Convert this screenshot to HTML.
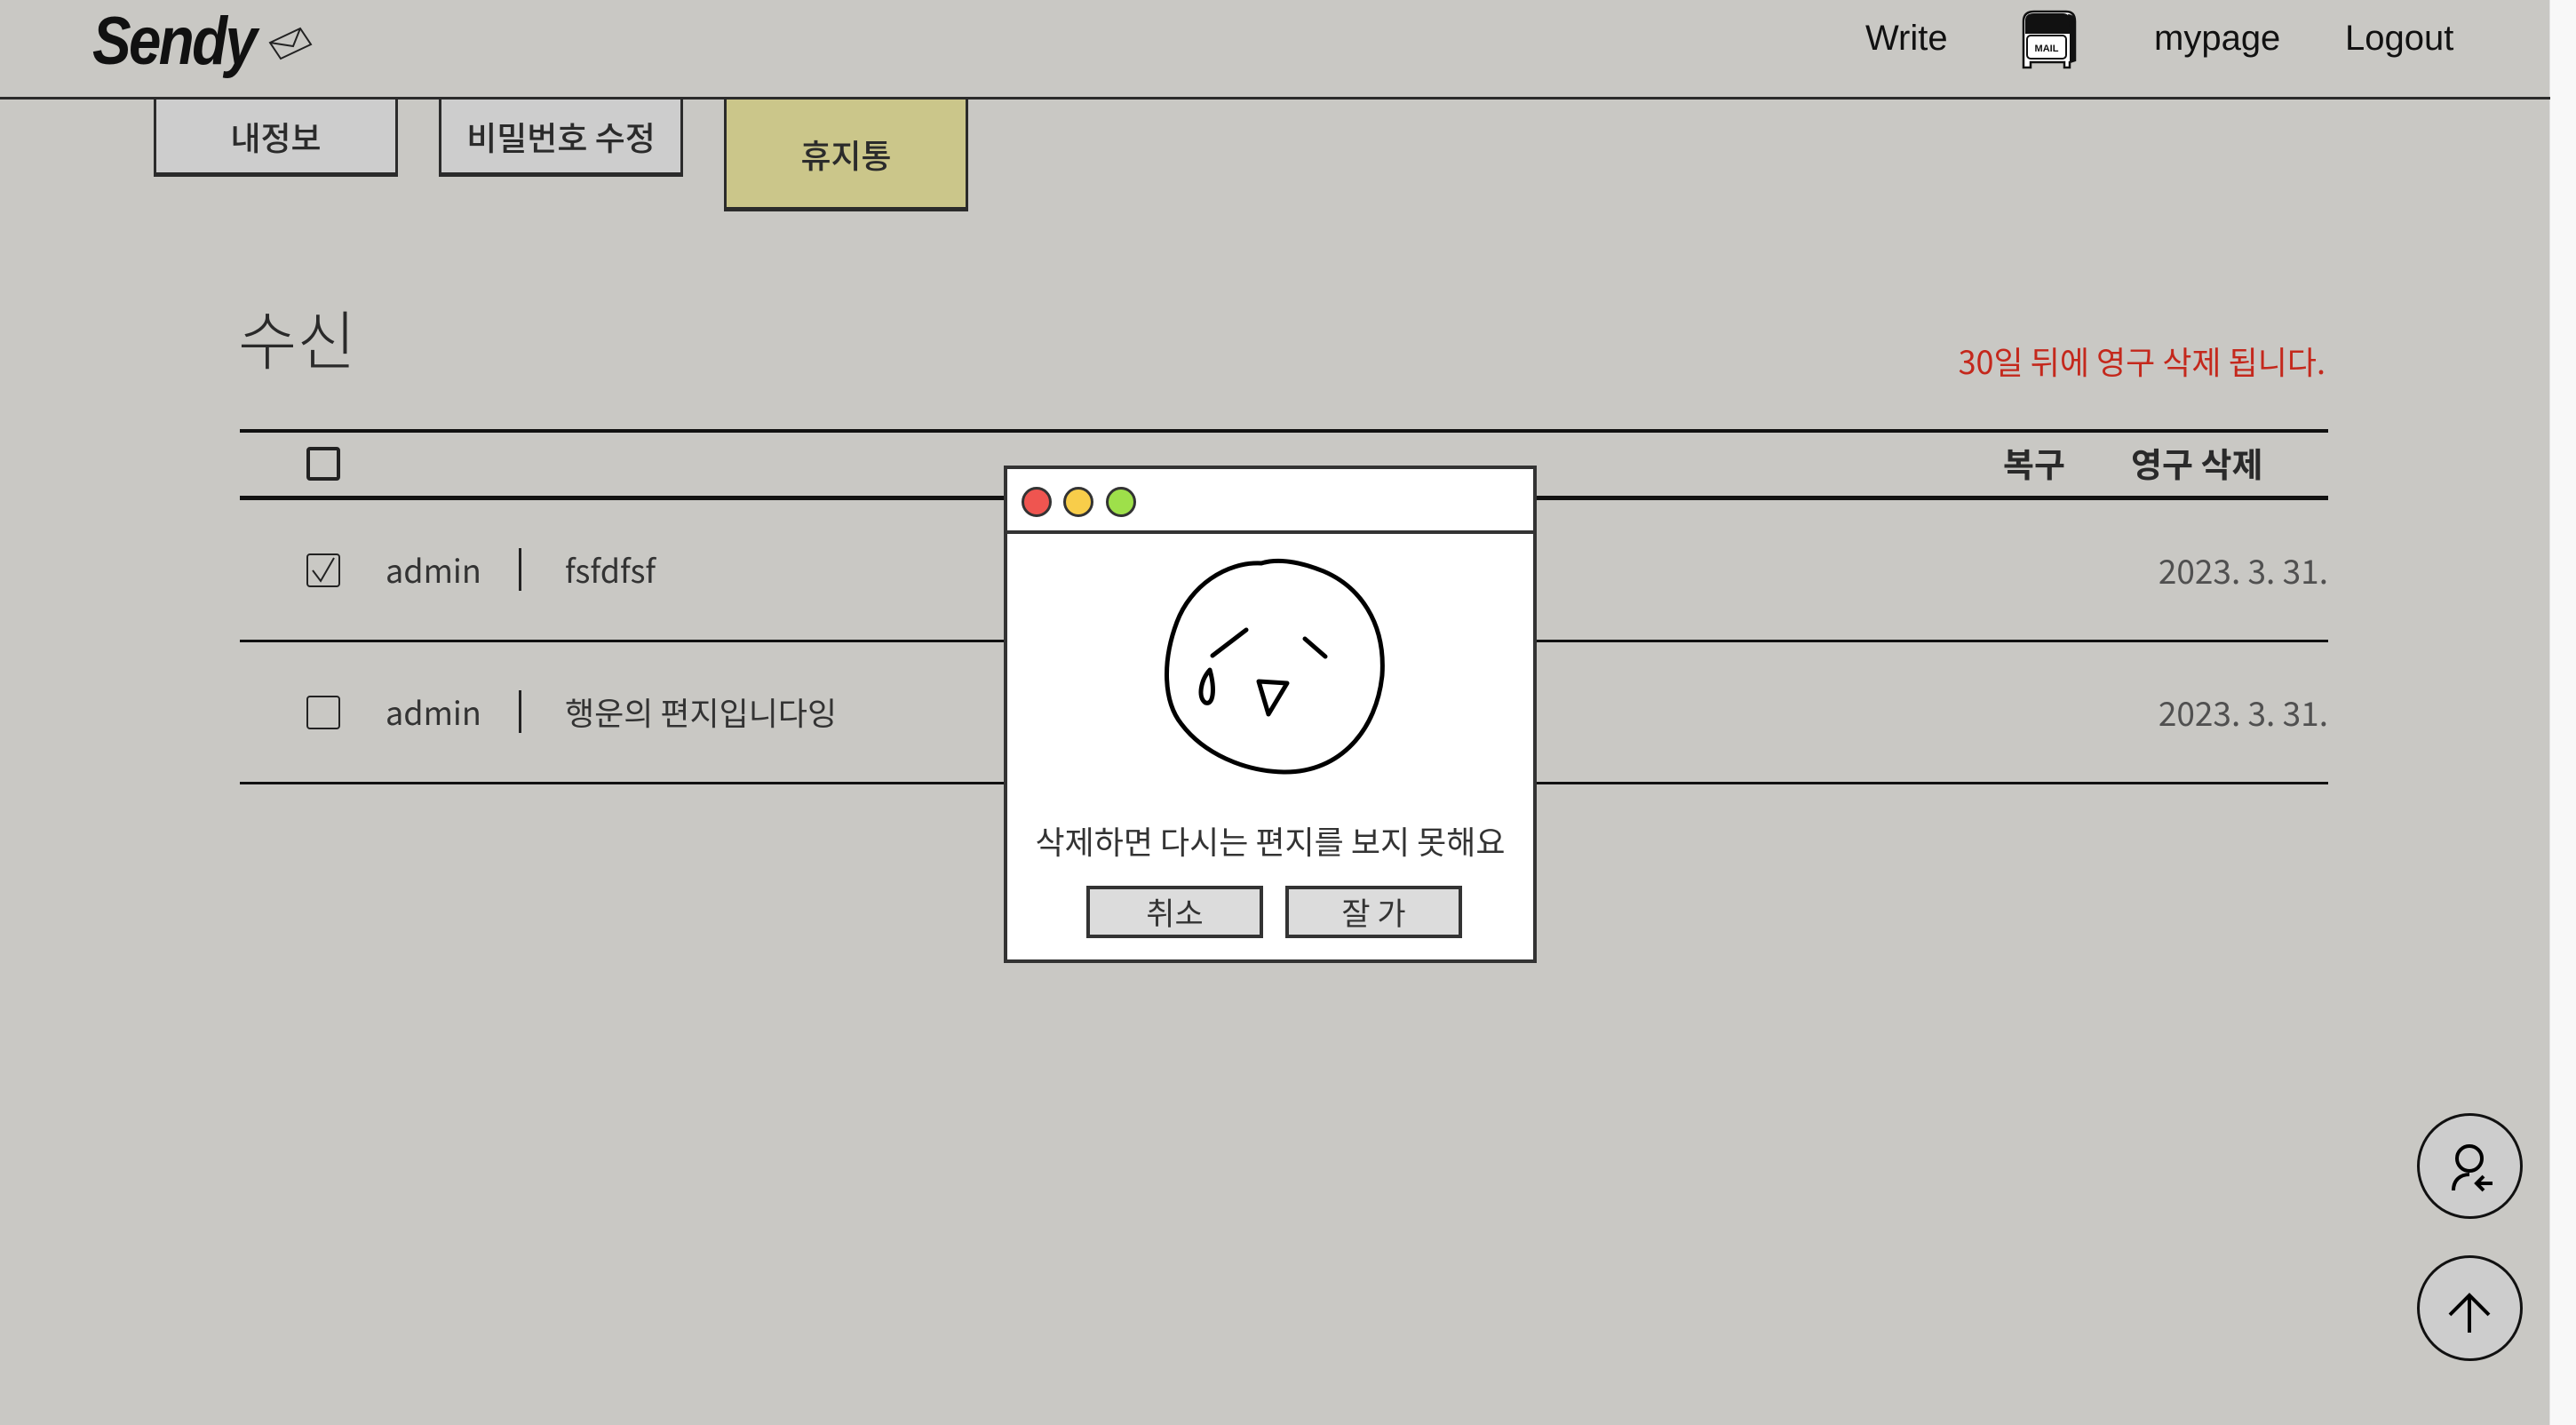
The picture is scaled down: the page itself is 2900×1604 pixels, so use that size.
<!DOCTYPE html>
<html><head><meta charset="utf-8">
<style>
*{margin:0;padding:0;box-sizing:border-box}
html,body{width:2900px;height:1604px;overflow:hidden;background:#f8f8f8}
body{position:relative;font-family:"Liberation Sans","Noto Sans CJK KR",sans-serif;color:#2a2a2a}
.page{position:absolute;left:0;top:0;width:2871px;height:1604px;background:#c9c8c4;border-right:1px solid #e2e2e2}
.abs{position:absolute}
.hline{position:absolute;left:0;top:109px;width:2871px;height:3px;background:#2b2b2b}
.logo{left:104px;top:2px;font:italic bold 76px/90px "Liberation Sans",sans-serif;color:#111;letter-spacing:-3px;transform:scaleX(0.86);transform-origin:left}
.nav{font:40px/40px "Liberation Sans",sans-serif;color:#111;top:23px}
.tab{position:absolute;top:109px;width:275px;height:90px;border:3px solid #2b2b2b;border-bottom-width:5px;background:#cdcdcd;display:flex;align-items:center;justify-content:center;font:500 37px "Noto Sans CJK KR",sans-serif;color:#2b2b2b}
.kr{font-family:"Noto Sans CJK KR",sans-serif}
.tline{position:absolute;left:270px;width:2351px;background:#111}
.row{position:absolute;left:270px;width:2351px;height:160px;display:flex;align-items:center;font:36px "Noto Sans CJK KR",sans-serif;color:#333}
.cb{position:absolute;left:345px;width:38px;height:38px;border:2px solid #222;border-radius:4px}
.date{position:absolute;right:0;color:#505050;font-weight:400;font-size:37px}
.modal{position:absolute;left:1130px;top:524px;width:600px;height:560px;background:#fff;border:4px solid #333}
.dot{position:absolute;top:20px;width:34px;height:34px;border-radius:50%;border:3px solid #333}
.btn{position:absolute;top:469px;width:199px;height:59px;border:4px solid #333;background:#dcdcdc;display:flex;align-items:center;justify-content:center;font:35px "Noto Sans CJK KR",sans-serif;color:#333}
.fab{position:absolute;left:2721px;width:119px;height:119px;border-radius:50%;border:3px solid #111;background:#cdcdcd}
</style></head><body>
<div class="page">
  <div class="abs logo">Sendy</div>
  <svg class="abs" style="left:300px;top:28px" width="56" height="42" viewBox="0 0 56 42"><g fill="none" stroke="#222" stroke-width="2"><path d="M4 20 L38 4 L50 22 L16 38 Z"/><path d="M4 20 L30 24 L38 4"/></g></svg>

  <div class="abs nav" style="left:2100px">Write</div>
  <svg class="abs" style="left:2272px;top:10px" width="70" height="70" viewBox="0 0 70 70">
    <path d="M6 66 V14 Q6 3 18 3 H54 Q64 3 64 14 V58 L58 60 V66 H52 V60 H14 V66 Z" fill="#fff" stroke="#111" stroke-width="2.5"/>
    <path d="M8 13 Q8 5 18 5 H50 Q58 5 58 13 V28 H8 Z" fill="#111"/>
    <path d="M56 6 Q64 6 64 16 V58 L58 60 V20 Z" fill="#111"/>
    <rect x="10" y="30" width="44" height="26" rx="4" fill="none" stroke="#111" stroke-width="2"/>
    <text x="32" y="48" font-family="Liberation Sans" font-size="11" font-weight="bold" text-anchor="middle" fill="#111">MAIL</text>
  </svg>
  <div class="abs nav" style="left:2425px">mypage</div>
  <div class="abs nav" style="left:2640px">Logout</div>
  <div class="hline"></div>

  <div class="tab" style="left:173px">내정보</div>
  <div class="tab" style="left:494px">비밀번호 수정</div>
  <div class="tab" style="left:815px;height:129px;background:#cbc68a">휴지통</div>

  <div class="abs kr" style="left:268px;top:343px;font-size:72px;line-height:72px;font-weight:300;color:#2a2a2a">수신</div>
  <div class="abs kr" style="right:252px;top:388px;font-size:36px;line-height:36px;color:#c4281c">30일 뒤에 영구 삭제 됩니다.</div>

  <div class="tline" style="top:483px;height:4px"></div>
  <div class="cb" style="top:503px;border-width:4px"></div>
  <div class="abs kr" style="left:2255px;top:502px;font-size:38px;line-height:38px;font-weight:bold;color:#2a2a2a">복구</div>
  <div class="abs kr" style="left:2399px;top:502px;font-size:38px;line-height:38px;font-weight:bold;color:#2a2a2a">영구 삭제</div>
  <div class="tline" style="top:558px;height:5px"></div>

  <div class="row" style="top:561px">
    <span style="position:absolute;left:164px">admin</span>
    <span style="position:absolute;left:314px;width:3px;height:48px;background:#222"></span>
    <span style="position:absolute;left:366px">fsfdfsf</span>
    <span class="date">2023. 3. 31.</span>
  </div>
  <div class="cb" style="top:623px"><svg width="34" height="34" viewBox="0 0 34 34" style="position:absolute;left:0;top:0"><path d="M5 17 L14 29 L29 3" fill="none" stroke="#222" stroke-width="2"/></svg></div>
  <div class="tline" style="top:720px;height:3px"></div>

  <div class="row" style="top:721px">
    <span style="position:absolute;left:164px">admin</span>
    <span style="position:absolute;left:314px;width:3px;height:48px;background:#222"></span>
    <span style="position:absolute;left:366px">행운의 편지입니다잉</span>
    <span class="date">2023. 3. 31.</span>
  </div>
  <div class="cb" style="top:783px"></div>
  <div class="tline" style="top:880px;height:3px"></div>

  <div class="modal">
    <div class="dot" style="left:16px;background:#ef5550"></div>
    <div class="dot" style="left:63px;background:#f8cd4a"></div>
    <div class="dot" style="left:111px;background:#9ee04a"></div>
    <div class="abs" style="left:0;top:69px;width:592px;height:4px;background:#333"></div>
    <svg class="abs" style="left:0;top:0" width="592" height="552" viewBox="1134 528 592 552">
      <g fill="none" stroke="#000" stroke-width="5" stroke-linecap="round" stroke-linejoin="round">
        <path d="M1420 634 C1380 632 1340 660 1325 700 C1308 745 1310 790 1330 815 C1355 848 1400 868 1445 869 C1510 870 1550 820 1556 760 C1560 700 1530 660 1490 643 C1465 633 1440 628 1420 634 Z"/>
        <path d="M1365 738 L1403 709"/>
        <path d="M1469 719 L1492 739"/>
        <path d="M1362 754 C1352 765 1348 785 1357 791 C1366 794 1368 776 1362 754 Z"/>
        <path d="M1417 767 L1449 769 L1428 804 Z"/>
      </g>
    </svg>
    <div class="abs kr" style="left:0;width:592px;text-align:center;top:400px;font-size:36px;line-height:36px;color:#333;white-space:nowrap">삭제하면 다시는 편지를 보지 못해요</div>
    <div class="btn" style="left:89px">취소</div>
    <div class="btn" style="left:313px">잘 가</div>
  </div>

  <div class="fab" style="top:1253px">
    <svg width="113" height="113" viewBox="0 0 113 113" style="position:absolute;left:0;top:0">
      <g fill="none" stroke="#000" stroke-width="4">
        <circle cx="56" cy="48" r="14"/>
        <path d="M38 84 C38 72 46 66 56 66"/>
        <path d="M82 76 H64 M72 68 L64 76 L72 84"/>
      </g>
    </svg>
  </div>
  <div class="fab" style="top:1413px">
    <svg width="113" height="113" viewBox="0 0 113 113" style="position:absolute;left:0;top:0">
      <g fill="none" stroke="#000" stroke-width="4">
        <path d="M56 84 V42 M34 64 L56 42 L78 64"/>
      </g>
    </svg>
  </div>
</div>
</body></html>
